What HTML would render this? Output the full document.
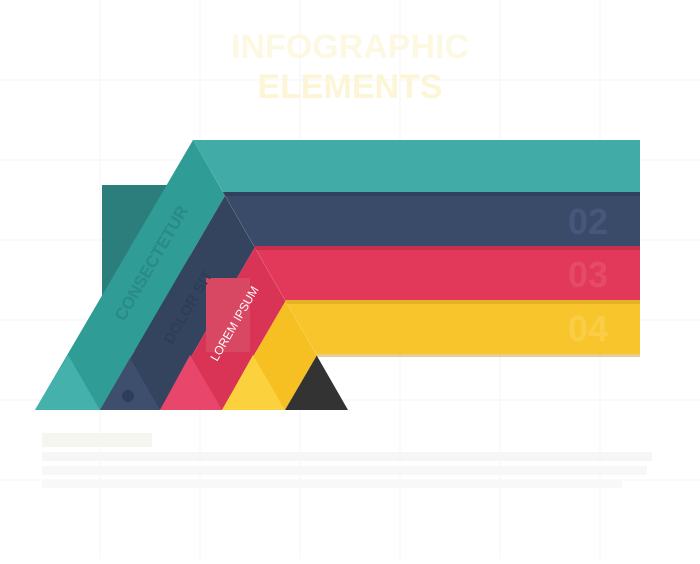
<!DOCTYPE html>
<html><head><meta charset="utf-8"><style>
html,body{margin:0;padding:0;background:#fff;}
body{width:700px;height:559px;overflow:hidden;font-family:"Liberation Sans",sans-serif;}
</style></head><body>
<svg width="700" height="559" viewBox="0 0 700 559" xmlns="http://www.w3.org/2000/svg">
<defs>
<clipPath id="tri"><polygon points="35,410 193,140 348,410"/></clipPath>
</defs>
<g stroke="#f4f4f4" stroke-width="1">
<line x1="100" y1="0" x2="100" y2="559"/><line x1="200" y1="0" x2="200" y2="559"/><line x1="300" y1="0" x2="300" y2="559"/><line x1="400" y1="0" x2="400" y2="559"/><line x1="500" y1="0" x2="500" y2="559"/><line x1="600" y1="0" x2="600" y2="559"/>
<line x1="0" y1="80" x2="700" y2="80"/><line x1="0" y1="160" x2="700" y2="160"/><line x1="0" y1="240" x2="700" y2="240"/><line x1="0" y1="320" x2="700" y2="320"/><line x1="0" y1="400" x2="700" y2="400"/><line x1="0" y1="480" x2="700" y2="480"/>
</g>
<text x="350" y="58" text-anchor="middle" font-size="34" font-weight="bold" fill="#fcf8e2">INFOGRAPHIC</text>
<text x="350" y="98" text-anchor="middle" font-size="34" font-weight="bold" fill="#fcf6d6">ELEMENTS</text>
<rect x="42" y="433" width="110" height="14" fill="#f6f6f0"/>
<rect x="42" y="452" width="610" height="9" fill="#f6f6f6"/>
<rect x="42" y="466" width="605" height="9" fill="#f7f7f7"/>
<rect x="42" y="480" width="580" height="8" fill="#f8f8f8"/>
<polygon points="193,140 640,140 640,192 223,192" fill="#40aba7"/>
<polygon points="223,192 640,192 640,246 254,246" fill="#3a4b6a"/>
<polygon points="254,246 640,246 640,300 285,300" fill="#e2395a"/>
<polygon points="285,300 640,300 640,354 316,354" fill="#f8c52c"/>
<rect x="223" y="192" width="417" height="4" fill="#2c3a55" opacity=".6"/>
<rect x="254" y="246" width="386" height="4" fill="#b82a47" opacity=".6"/>
<rect x="285" y="300" width="355" height="4" fill="#d7a51c" opacity=".6"/>
<rect x="316" y="354" width="324" height="3" fill="#c9a020" opacity=".5"/>
<g font-size="36" font-weight="bold">
<text x="568" y="234" fill="#45577a">02</text>
<text x="568" y="287" fill="#e54a68">03</text>
<text x="568" y="341" fill="#f9cd45">04</text>
</g>
<rect x="102" y="185" width="88" height="165" fill="#2b7e7b"/>
<g clip-path="url(#tri)">
<polygon points="35,410 100,410 275,110 210,110 0,110 0,410" fill="#2f9c96"/>
<polygon points="100,410 160,410 335,110 275,110" fill="#34445f"/>
<polygon points="160,410 222,410 397,110 335,110" fill="#d93456"/>
<polygon points="222,410 285,410 460,110 397,110" fill="#f6bf22"/>
<polygon points="285,410 400,410 400,110 460,110" fill="#333"/>
<polygon points="35,410 100,410 68,355" fill="#44b1ac"/>
<polygon points="100,410 160,410 130,358" fill="#3e4f6e"/>
<polygon points="160,410 222,410 190,355" fill="#e8466a"/>
<polygon points="222,410 285,410 253,355" fill="#fbd13e"/>
</g>
<rect x="206" y="278" width="44" height="74" fill="#d94862"/>
<text transform="translate(124,322) rotate(-60)" font-size="17" font-weight="bold" fill="#2a8a85">CONSECTETUR</text>
<text transform="translate(172,345) rotate(-60)" font-size="15" font-weight="bold" fill="#2e3d57">DOLOR SIT</text>
<text transform="translate(217,362) rotate(-60)" font-size="12" fill="#fff">LOREM IPSUM</text>
<circle cx="128" cy="396" r="6" fill="#2f3e58"/>
</svg>
</body></html>
